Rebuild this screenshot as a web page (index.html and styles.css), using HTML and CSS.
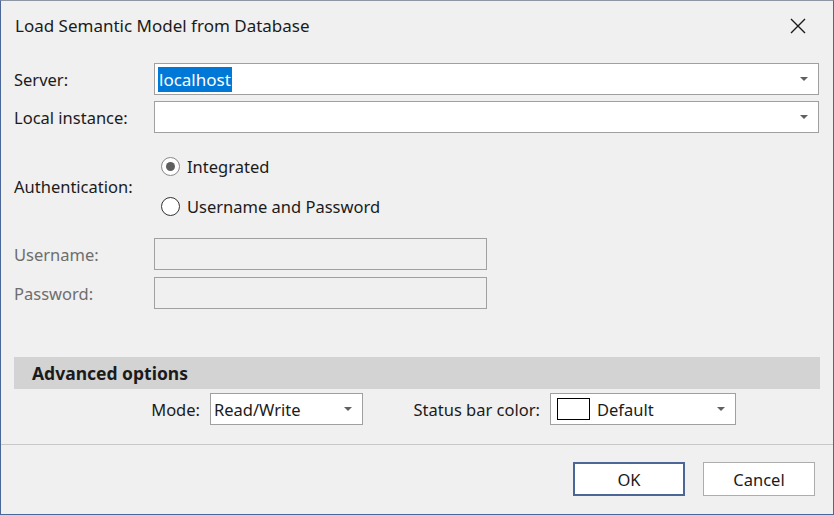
FILE: index.html
```html
<!DOCTYPE html>
<html>
<head>
<meta charset="utf-8">
<link rel="stylesheet" href="styles.css">
</head>
<body>
<div class="dialog">
  <div class="titlebar">
    <span class="title">Load Semantic Model from Database</span>
    <svg class="close" width="16" height="16" viewBox="0 0 16 16"><path d="M1 1 L15 15 M15 1 L1 15" stroke="#1a1a1a" stroke-width="1.4" fill="none"/></svg>
  </div>
  <div class="form">
    <div class="row">
      <label class="lbl">Server:</label>
      <div class="combo"><span class="sel">localhost</span><span class="arrow"></span></div>
    </div>
    <div class="row">
      <label class="lbl">Local instance:</label>
      <div class="combo"><span class="arrow"></span></div>
    </div>
    <div class="row auth">
      <label class="lbl">Authentication:</label>
      <div class="radios">
        <div class="radio-row"><span class="radio checked"></span><span>Integrated</span></div>
        <div class="radio-row"><span class="radio"></span><span>Username and Password</span></div>
      </div>
    </div>
    <div class="row cred first">
      <label class="lbl dis">Username:</label>
      <div class="tb"></div>
    </div>
    <div class="row cred">
      <label class="lbl dis">Password:</label>
      <div class="tb"></div>
    </div>
  </div>
  <div class="adv-head">Advanced options</div>
  <div class="adv">
    <span class="adv-lbl mode-lbl">Mode:</span>
    <div class="dd mode"><span>Read/Write</span><span class="arrow"></span></div>
    <span class="adv-lbl status-lbl">Status bar color:</span>
    <div class="dd status"><span class="swatch"></span><span>Default</span><span class="arrow"></span></div>
  </div>
  <div class="footer">
    <button class="btn ok">OK</button>
    <button class="btn">Cancel</button>
  </div>
</div>
</body>
</html>
```
FILE: styles.css
```css
html, body {
  margin: 0;
  padding: 0;
  background: #f0f0f0;
}
.dialog {
  box-sizing: border-box;
  width: 834px;
  height: 515px;
  background: #f0f0f0;
  border: 1px solid #4a6797;
  border-top-color: #8e96a3;
  font-family: "Noto Sans", "Open Sans", sans-serif;
  font-size: 16.5px;
  color: #1b1b1b;
  display: flex;
  flex-direction: column;
}
.titlebar {
  height: 49px;
  display: flex;
  align-items: center;
  justify-content: space-between;
  padding: 0 27px 0 14px;
}
.title {
  font-size: 17px;
  color: #1b1b1b;
}
.close {
  display: block;
}
.form {
  padding: 13px 14px 0 13px;
}
.row {
  display: flex;
  align-items: center;
  height: 32px;
  margin-bottom: 6px;
}
.lbl {
  width: 140px;
  flex: none;
}
.dis {
  color: #6d6d6d;
}
.combo {
  flex: 1;
  height: 32px;
  box-sizing: border-box;
  border: 1px solid #a0a0a0;
  background: #fff;
  display: flex;
  align-items: center;
  padding: 0 10px 0 3px;
  font-size: 17px;
}
.sel {
  background: #0078d7;
  color: #fff;
  padding: 0 1px;
  line-height: 25px;
}
.arrow {
  margin-left: auto;
  width: 0;
  height: 0;
  border-left: 4px solid transparent;
  border-right: 4px solid transparent;
  border-top: 4px solid #606060;
}
.row.auth {
  height: 80px;
  margin-top: 13px;
  margin-bottom: 0;
}
.radios {
  display: flex;
  flex-direction: column;
  gap: 20px;
  padding-left: 7px;
}
.radio-row {
  display: flex;
  align-items: center;
  gap: 7px;
  height: 20px;
}
.radio {
  box-sizing: border-box;
  width: 19px;
  height: 19px;
  border-radius: 50%;
  border: 1px solid #333;
  background: #fff;
  display: flex;
  align-items: center;
  justify-content: center;
}
.radio.checked {
  border-color: #888;
}
.radio.checked::after {
  content: "";
  width: 9px;
  height: 9px;
  border-radius: 50%;
  background: #5f5f5f;
}
.row.cred.first {
  margin-top: 12px;
  margin-bottom: 7px;
}
.tb {
  width: 333px;
  height: 32px;
  box-sizing: border-box;
  border: 1px solid #a0a0a0;
  background: #f0f0f0;
}
.adv-head {
  margin: 42px 13px 0 13px;
  height: 32px;
  background: #d3d3d3;
  font-weight: bold;
  font-size: 17.5px;
  display: flex;
  align-items: center;
  padding-left: 18px;
}
.adv {
  display: flex;
  align-items: center;
  height: 32px;
  margin-top: 4px;
}
.adv-lbl {
  text-align: right;
}
.mode-lbl {
  width: 199px;
  margin-right: 10px;
}
.status-lbl {
  margin-left: 37px;
  width: 140px;
  margin-right: 10px;
}
.dd {
  box-sizing: border-box;
  height: 32px;
  border: 1px solid #a0a0a0;
  background: #fff;
  display: flex;
  align-items: center;
  padding: 0 10px 0 3px;
}
.dd.mode {
  width: 153px;
}
.dd.status {
  width: 186px;
  padding-left: 6px;
}
.swatch {
  box-sizing: border-box;
  width: 33px;
  height: 22px;
  border: 1px solid #000;
  background: #fff;
  margin-right: 7px;
}
.footer {
  margin-top: 19px;
  border-top: 1px solid #c8c8c8;
  display: flex;
  justify-content: flex-end;
  gap: 18px;
  padding: 17px 18px 0 0;
}
.btn {
  box-sizing: border-box;
  width: 112px;
  height: 34px;
  background: #fff;
  border: 1px solid #adadad;
  font-family: inherit;
  font-size: 16.5px;
  color: #1b1b1b;
  padding: 0;
}
.btn.ok {
  border: 2px solid #4a6797;
}
```
